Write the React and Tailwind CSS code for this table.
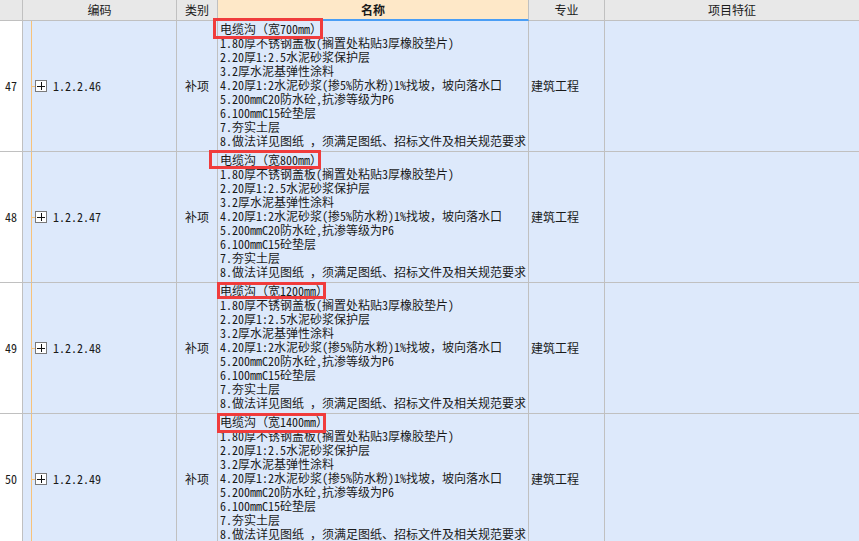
import React from "react";

const FONT = {
  fontFamily:
    '"Noto Sans Mono CJK SC", "Noto Sans CJK SC", "Liberation Mono", monospace',
};

const rows = [
  { n: 47, code: "1.2.2.46", w: "700" },
  { n: 48, code: "1.2.2.47", w: "800" },
  { n: 49, code: "1.2.2.48", w: "1200" },
  { n: 50, code: "1.2.2.49", w: "1400" },
];

const lines = [
  "1.80厚不锈钢盖板(搁置处粘贴3厚橡胶垫片)",
  "2.20厚1:2.5水泥砂浆保护层",
  "3.2厚水泥基弹性涂料",
  "4.20厚1:2水泥砂浆(掺5%防水粉)1%找坡，坡向落水口",
  "5.200mmC20防水砼,抗渗等级为P6",
  "6.100mmC15砼垫层",
  "7.夯实土层",
  "8.做法详见图纸 ，须满足图纸、招标文件及相关规范要求",
];

function Row({ r }) {
  return (
    <div className="flex h-[131px] shrink-0 border-b border-[#c0c0c0]">
      <div className="w-[23px] shrink-0 border-r border-[#c0c0c0] bg-white flex items-center justify-center">
        {r.n}
      </div>
      <div className="w-[154px] shrink-0 border-r border-[#c0c0c0] bg-[#dde9fb] pl-[8px] flex">
        <div className="border-l border-[#f7c27a] flex items-center">
          <div className="w-[3px] h-px bg-[#f7c27a]" />
          <div className="w-[12px] h-[12px] border border-[#7a7a7a] bg-white flex items-center justify-center">
            <svg width="10" height="10" viewBox="0 0 10 10">
              <path d="M1 5h8M5 1v8" stroke="#111" strokeWidth="1" shapeRendering="crispEdges" />
            </svg>
          </div>
          <span className="ml-[6px]" style={{ letterSpacing: "0px" }}>{r.code.split("").join("")}</span>
        </div>
      </div>
      <div className="w-[41px] shrink-0 border-r border-[#c0c0c0] bg-[#dde9fb] flex items-center justify-center">
        补项
      </div>
      <div className="w-[311px] shrink-0 border-r border-[#c0c0c0] bg-[#dde9fb] pl-[2px] pt-[1px] overflow-hidden whitespace-nowrap">
        <div>电缆沟（宽{r.w}mm）</div>
        {lines.map((l, i) => (
          <div key={i}>{l}</div>
        ))}
      </div>
      <div className="w-[76px] shrink-0 border-r border-[#c0c0c0] bg-[#dde9fb] pl-[2px] flex items-center">
        建筑工程
      </div>
      <div className="flex-1 bg-[#dde9fb]" />
    </div>
  );
}

export default function App() {
  const boxes = [
    { l: 213, t: 18, w: 110, h: 21 },
    { l: 209, t: 150, w: 112, h: 19 },
    { l: 217, t: 282, w: 109, h: 17 },
    { l: 217, t: 413, w: 109, h: 20 },
  ];
  return (
    <div
      className="relative w-[859px] h-[541px] overflow-hidden bg-white text-[12px] leading-[14px] text-[#1a1a1a]"
      style={FONT}
    >
      <div className="flex h-[21px]">
        <div className="w-[23px] shrink-0 border-r border-b border-[#c0c0c0] bg-[#e8e8e8]" />
        <div className="w-[154px] shrink-0 border-r border-b border-[#c0c0c0] bg-[#e8e8e8] flex items-center justify-center">
          编码
        </div>
        <div className="w-[41px] shrink-0 border-r border-b border-[#c0c0c0] bg-[#e8e8e8] flex items-center justify-center">
          类别
        </div>
        <div className="w-[311px] shrink-0 border-r border-[#c0c0c0] border-b-2 border-b-[#4a9ef5] bg-[#fee8c8] flex items-center justify-center font-bold">
          名称
        </div>
        <div className="w-[76px] shrink-0 border-r border-b border-[#c0c0c0] bg-[#e8e8e8] flex items-center justify-center">
          专业
        </div>
        <div className="flex-1 border-b border-[#c0c0c0] bg-[#e8e8e8] flex items-center justify-center">
          项目特征
        </div>
      </div>
      {rows.map((r) => (
        <Row key={r.n} r={r} />
      ))}
      {boxes.map((b, i) => (
        <div
          key={i}
          className="absolute border-[3px] border-[#f03c3c] pointer-events-none"
          style={{ left: b.l, top: b.t, width: b.w, height: b.h }}
        />
      ))}
    </div>
  );
}
